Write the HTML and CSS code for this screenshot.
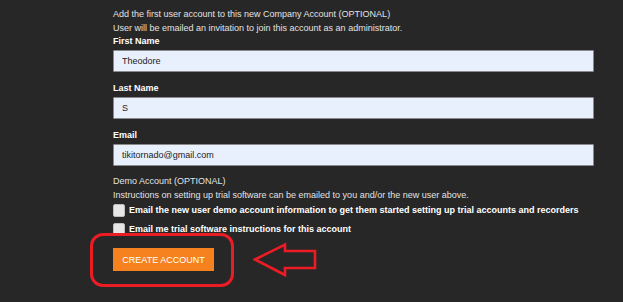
FILE: index.html
```html
<!DOCTYPE html>
<html lang="en">
<head>
  <meta charset="UTF-8" />
  <title>Create Company Account</title>
  <link rel="stylesheet" href="styles.css">
</head>
<body>
  <div class="form-wrap">
    <p class="note">Add the first user account to this new Company Account (OPTIONAL)</p>
    <p class="note">User will be emailed an invitation to join this account as an administrator.</p>

    <label class="field-label" for="firstName">First Name</label>
    <input class="field" type="text" id="firstName" value="Theodore" />

    <label class="field-label" for="lastName">Last Name</label>
    <input class="field" type="text" id="lastName" value="S" />

    <label class="field-label" for="email">Email</label>
    <input class="field" type="text" id="email" value="tikitornado@gmail.com" />

    <p class="note demo-title">Demo Account (OPTIONAL)</p>
    <p class="note">Instructions on setting up trial software can be emailed to you and/or the new user above.</p>

    <label class="check-row">
      <span class="check-box"></span>
      Email the new user demo account information to get them started setting up trial accounts and recorders
    </label>
    <label class="check-row">
      <span class="check-box"></span>
      Email me trial software instructions for this account
    </label>

    <div class="submit-row">
      <div class="highlight">
        <button class="create-btn" type="button">CREATE ACCOUNT</button>
      </div>
      <svg class="pointer" width="64" height="36" viewBox="0 0 64 36">
        <polygon points="2,17.5 32,2.5 32,9 62,9 62,26 32,26 32,33" fill="none" stroke="#ec1c24" stroke-width="2.6" stroke-linejoin="miter" />
      </svg>
    </div>
  </div>
</body>
</html>
```

FILE: styles.css
```css
* {
  box-sizing: border-box;
  margin: 0;
  padding: 0;
}
body {
  background-color: #272727;
  font-family: 'Liberation Sans', Arial, sans-serif;
  font-size: 9px;
  color: #e2e2e2;
  width: 623px;
  height: 302px;
  overflow: hidden;
}
.form-wrap {
  padding: 8px 0 0 113px;
  width: 594px;
  display: flex;
  flex-direction: column;
}
.note {
  line-height: 13.5px;
}
.field-label {
  font-weight: bold;
  color: #fff;
  line-height: 14px;
  margin-top: 9px;
  margin-bottom: 2px;
}
.note + .field-label {
  margin-top: -1px;
}
.field {
  height: 22px;
  width: 481px;
  background-color: #e8f0fe;
  border: 1px solid #8a8a8a;
  border-radius: 1px;
  padding: 0 8px;
  font-family: 'Liberation Sans', Arial, sans-serif;
  font-size: 9px;
  color: #222;
  outline: none;
}
.demo-title {
  margin-top: 9px;
}
.check-row {
  display: flex;
  align-items: center;
  gap: 4px;
  font-weight: bold;
  color: #fff;
  height: 14px;
  margin-top: 1px;
  margin-bottom: 2px;
}
.check-row + .check-row {
  margin-top: 3px;
}
.check-box {
  width: 12px;
  height: 13px;
  background-color: #e6e6e6;
  border: 1px solid #bdbdbd;
  border-radius: 2px;
}
.submit-row {
  display: flex;
  align-items: center;
  gap: 19px;
  margin-top: -5px;
  margin-left: -23px;
}
.highlight {
  border: 3px solid #ec1c24;
  border-radius: 13px;
  padding: 12px 17px 13px 20px;
}
.create-btn {
  display: block;
  background-color: #f5821f;
  color: #fff;
  border: none;
  font-family: 'Liberation Sans', Arial, sans-serif;
  font-size: 9px;
  text-align: center;
  height: 23px;
  width: 101px;
  cursor: pointer;
}
.pointer {
  display: block;
}
```
